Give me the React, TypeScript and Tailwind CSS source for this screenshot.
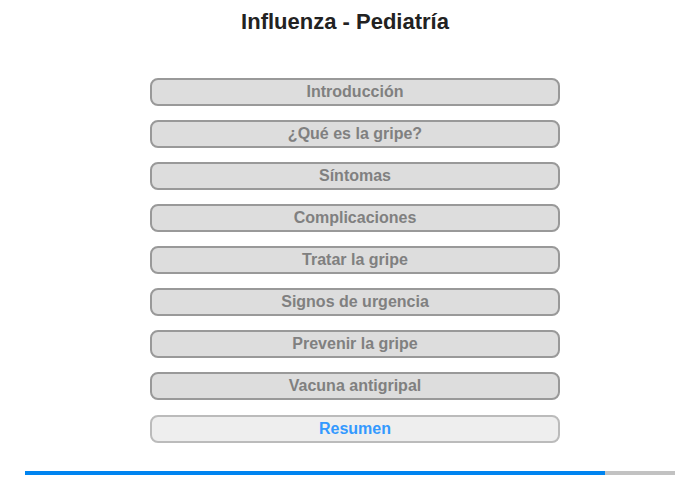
const topics = [
  "Introducción",
  "¿Qué es la gripe?",
  "Síntomas",
  "Complicaciones",
  "Tratar la gripe",
  "Signos de urgencia",
  "Prevenir la gripe",
  "Vacuna antigripal",
];

export default function App() {
  return (
    <div className="h-[480px] w-[700px] bg-white font-['Liberation_Sans',Arial,sans-serif]">
      <h1 className="pt-[9px] pr-[10px] text-center text-[22px] leading-[26px] font-bold text-[#222]">
        Influenza - Pediatría
      </h1>
      <ul className="mt-[43px] ml-[150px] flex w-[410px] flex-col gap-[14px]">
        {topics.map((t) => (
          <li
            key={t}
            className="flex h-[28px] items-center justify-center rounded-[8px] border-2 border-[#999] bg-[#ddd] text-[16px] font-bold text-[#808080]"
          >
            {t}
          </li>
        ))}
        <li className="mt-px flex h-[28px] items-center justify-center rounded-[8px] border-2 border-[#bbb] bg-[#eee] text-[16px] font-bold text-[#3399ff]">
          Resumen
        </li>
      </ul>
      <div className="mx-[25px] mt-[28px] flex h-[4px]">
        <div className="w-[580px] bg-[#0084f0]" />
        <div className="flex-1 bg-[#c2c2c2]" />
      </div>
    </div>
  );
}
